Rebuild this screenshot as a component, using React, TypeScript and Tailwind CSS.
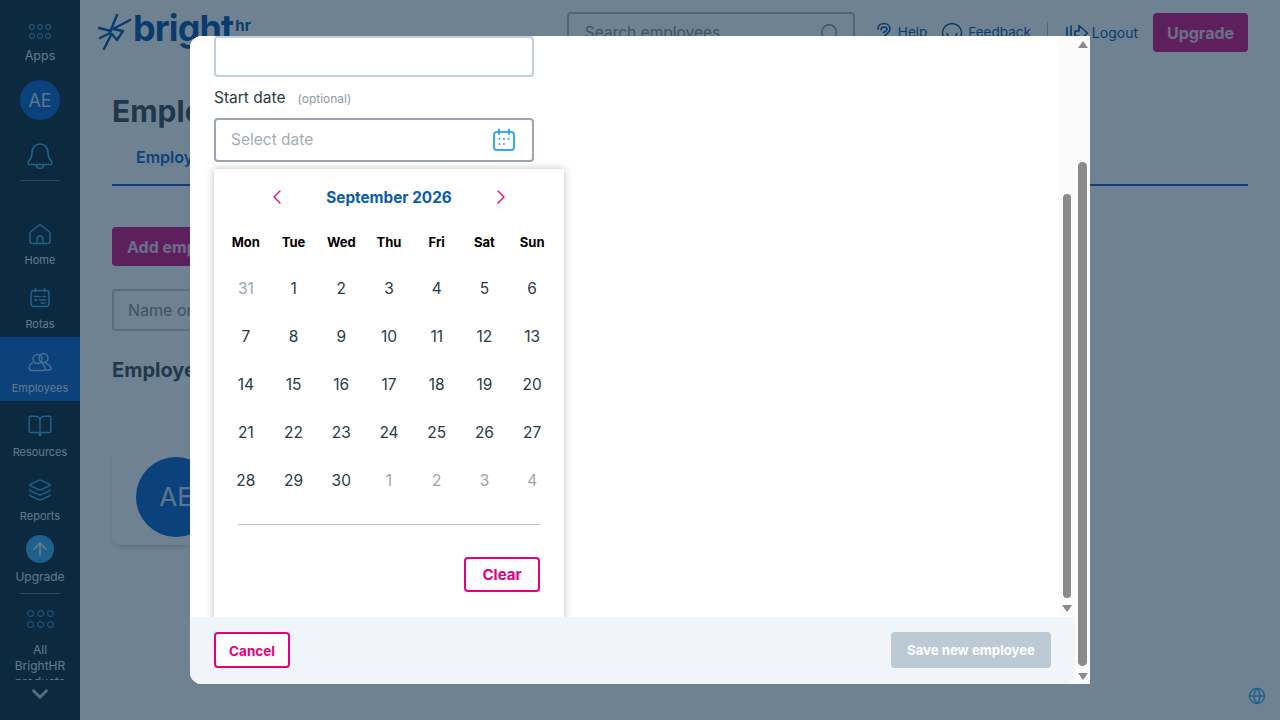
import { BookOpen, ChevronDown, ChevronLeft, ChevronRight, Globe, Layers, Search, ArrowUp } from "lucide-react";

const font = "font-['Inter','Liberation_Sans',sans-serif]";

function Dots({ big }: { big?: boolean }) {
  return (
    <div className={`grid grid-cols-3 ${big ? "gap-x-[3px] gap-y-[4px]" : "gap-x-[2px] gap-y-[3px]"}`}>
      {[0, 1, 2, 3, 4, 5].map((i) => (
        <span key={i} className={`${big ? "w-[7px] h-[7px]" : "w-[6px] h-[6px]"} rounded-full border-[1.5px] border-[#3fb0f5]`} />
      ))}
    </div>
  );
}

function BellIcon() {
  return (
    <svg width="28" height="28" viewBox="0 0 28 28" fill="none" stroke="#3fb0f5" strokeWidth="1.6" strokeLinejoin="round">
      <path d="M14 2c-5 0-8 4-8 8.5 0 5-1.500 7-3.500 9-1 1-.5 3 1 3h21c1.500 0 2-2 1-3-2-2-3.500-4-3.500-9C22 6 19 2 14 2Z" />
      <path d="M10.500 22.500c0 2.500 1.500 4 3.500 4s3.500-1.500 3.500-4" />
    </svg>
  );
}

function HomeIcon() {
  return (
    <svg width="22" height="22" viewBox="0 0 22 22" fill="none" stroke="#3fb0f5" strokeWidth="1.5" strokeLinejoin="round">
      <path d="M11 1.500 2 8.500c-.6.5-1 1-1 2V18c0 1.500 1 2.500 2.500 2.500h15c1.500 0 2.500-1 2.500-2.500v-7.500c0-1-.4-1.500-1-2Z" />
      <path d="M8 20.500V16a3 3 0 0 1 6 0v4.500" />
    </svg>
  );
}

function RotaIcon() {
  return (
    <svg width="22" height="22" viewBox="0 0 22 22" fill="none" stroke="#3fb0f5" strokeWidth="1.5" strokeLinecap="round">
      <rect x="2" y="3.500" width="18" height="16" rx="3" />
      <path d="M6.500 1.500v3.500M15.500 1.500v3.500M5.500 9.500h6M14 9.500h2.500M5.500 13h2.500M10.500 13h6M12 16h4" />
    </svg>
  );
}

function PeopleIcon() {
  return (
    <svg width="24" height="20" viewBox="0 0 24 20" fill="none" stroke="#9fd4f7" strokeWidth="1.4" strokeLinejoin="round">
      <circle cx="9.500" cy="7" r="4.500" />
      <circle cx="15.500" cy="6" r="4.500" />
      <path d="M5 10.500C2.500 12 1 14 1 16c0 1.500 1 2.500 3 2.500h11c2 0 2.500-1 2-2.500-.5-2-2-4-4-5.500M17 11c3 .5 6 3 6 5.500 0 1-.8 1.500-2 1.500h-4" />
    </svg>
  );
}

function CalendarIcon() {
  return (
    <svg width="24" height="24" viewBox="0 0 24 24" fill="none" stroke="#38a9f0" strokeWidth="2" strokeLinecap="round">
      <rect x="2" y="4" width="20" height="18" rx="3" />
      <path d="M7 1.500V6M17 1.500V6" />
      <path d="M7.500 11h.01M12 11h.01M16.500 11h.01M7.500 16h.01M12 16h.01" strokeWidth="2.200" />
    </svg>
  );
}

function HelpIcon() {
  return (
    <svg width="16" height="22" viewBox="0 0 16 22" fill="none" stroke="currentColor" strokeWidth="1.600" strokeLinecap="round" strokeLinejoin="round">
      <path d="M2 7c0-3.500 2.700-5.500 6-5.500s6 2.200 6 5.500c0 3.500-3 4.500-5.500 7-1 1-1.200 2.500-3 2.500-1 0-1.500-.5-2-1" />
      <path d="M5 8c0-2 1.500-3 3-3s3 1 3 2.500-2 2-3.500 3" />
    </svg>
  );
}

function FeedbackIcon() {
  return (
    <svg width="22" height="22" viewBox="0 0 22 22" fill="none" stroke="currentColor" strokeWidth="1.600" strokeLinecap="round">
      <circle cx="11" cy="11" r="9.500" />
      <path d="M6 11.500c1 3 3 4 5 4s4-1 5-4" />
    </svg>
  );
}

function LogoutIcon() {
  return (
    <svg width="24" height="22" viewBox="0 0 24 22" fill="none" stroke="currentColor" strokeWidth="1.600" strokeLinecap="round" strokeLinejoin="round">
      <path d="M2 5.500v13M6 4v16c0 1 1 1.500 2 1l3-1.500" />
      <path d="M10 9h4V3.500L22.500 11 14 18.500V14h-4Z" />
    </svg>
  );
}

function NavItem({ icon, label, active }: { icon: React.ReactNode; label: string; active?: boolean }) {
  return (
    <div className={`h-[64px] flex flex-col items-center justify-end pb-[6px] ${active ? "bg-[#0560c8]" : ""}`}>
      <div className="h-[26px] flex items-center justify-center mb-[6px]">{icon}</div>
      <span className="text-[11px] leading-[14px] text-[#dfe5ea]">{label}</span>
    </div>
  );
}

function Sidebar() {
  return (
    <aside className="w-[80px] h-full shrink-0 bg-[#052333] flex flex-col items-stretch relative overflow-hidden">
      <div className="flex flex-col items-center pt-[24px]">
        <Dots />
        <span className="text-[12.500px] leading-[16px] mt-[9px] text-[#dfe5ea]">Apps</span>
        <div className="w-[40px] h-[40px] rounded-full bg-[#0560c8] text-white/80 text-[18px] flex items-center justify-center mt-[16px]">AE</div>
        <div className="mt-[22px]"><BellIcon /></div>
        <div className="w-[40px] h-px bg-[#5a7585] mt-[10px]" />
      </div>
      <div className="mt-[28px]">
        <NavItem label="Home" icon={<HomeIcon />} />
        <NavItem label="Rotas" icon={<RotaIcon />} />
        <NavItem label="Employees" active icon={<PeopleIcon />} />
        <NavItem label="Resources" icon={<BookOpen size={26} strokeWidth={1.300} className="text-[#3fb0f5]" />} />
        <NavItem label="Reports" icon={<Layers size={24} strokeWidth={1.500} className="text-[#3fb0f5]" />} />
      </div>
      <div className="flex flex-col items-center mt-[6px]">
        <div className="w-[28px] h-[28px] rounded-full bg-[#38a9f0] flex items-center justify-center">
          <ArrowUp size={20} strokeWidth={2} className="text-white/80" />
        </div>
        <span className="text-[12px] leading-[14px] mt-[7px] text-[#dfe5ea]">Upgrade</span>
        <div className="w-[40px] h-px bg-[#5a7585] mt-[9px]" />
        <div className="mt-[16px]"><Dots big /></div>
        <div className="h-[38px] overflow-hidden text-center text-[12px] leading-[16px] text-[#dfe5ea] mt-[14px] w-[60px]">All BrightHR products</div>
      </div>
      <div className="flex justify-center mt-[1px]"><ChevronDown size={26} strokeWidth={2.600} className="text-[#c5d0d8]" /></div>
    </aside>
  );
}

function Logo() {
  return (
    <div className="flex items-start">
      <svg width="34" height="37" viewBox="0 0 34 37" fill="none" stroke="#0250a8" strokeWidth="2.400" strokeLinecap="round" strokeLinejoin="round">
        <path d="M19 1 12 18M1 14l12 3M32 6 15 15l10 2-6 9-5-6M2 24l10-5M6 35l7-14" />
      </svg>
      <span className="text-[36px] leading-[40px] font-bold text-[#0250a8] -mt-[6px] ml-[1px] tracking-tight">bright</span>
      <span className="text-[15px] leading-[16px] font-bold text-[#0250a8] mt-[4px] ml-[2px]">hr</span>
    </div>
  );
}

function Header() {
  return (
    <header className="h-[52px] flex items-center justify-between pl-[18px] pr-[32px] pt-[13px]">
      <Logo />
      <div className="flex items-center text-[#0250a8] text-[14px]">
        <div className="w-[288px] h-[41px] border-2 border-[#a8b8c6] rounded-[4px] flex items-center justify-between pl-[16px] pr-[12px] text-[#7b8a96] text-[15.500px]">
          <span>Search employees</span>
          <Search size={22} strokeWidth={1.500} />
        </div>
        <div className="flex items-center ml-[21px] gap-[6px] text-[13.500px]"><HelpIcon />Help</div>
        <div className="flex items-center ml-[14px] gap-[5px] text-[13.500px]"><FeedbackIcon />Feedback</div>
        <div className="w-px h-[22px] bg-[#a8b8c6] ml-[16px]" />
        <div className="flex items-center ml-[17px] gap-[3px]"><LogoutIcon />Logout</div>
        <div className="w-[95px] h-[39px] ml-[15px] rounded-[4px] bg-[#d4087e] text-white/80 font-bold text-[16px] flex items-center justify-center">Upgrade</div>
      </div>
    </header>
  );
}

function Page() {
  return (
    <div className="absolute inset-0 flex bg-white">
      <Sidebar />
      <main className="flex-1 min-w-0">
        <Header />
        <div className="px-[32px]">
          <h1 className="text-[30px] leading-[36px] font-bold text-[#3b4754] mt-[41px]">Employees</h1>
          <div className="border-b-2 border-[#0560c8] h-[54px] mt-[3px] pl-[24px] pt-[13px] text-[#0560c8] font-semibold text-[16px]">Employees</div>
          <div className="w-[180px] h-[39px] mt-[41px] rounded-[4px] bg-[#d4087e] text-white/80 font-bold text-[16px] flex items-center pl-[15px]">Add employee</div>
          <div className="w-[320px] h-[42px] mt-[23px] rounded-[4px] border-2 border-[#c0ccd8] text-[#7b8a96] text-[16px] flex items-center pl-[14px]">Name or email</div>
          <div className="text-[20px] leading-[24px] font-bold text-[#3b4754] mt-[27px]">Employees</div>
          <div className="w-[320px] h-[97px] mt-[66px] rounded-[8px] shadow-md bg-white flex items-center pl-[24px]">
            <div className="w-[80px] h-[80px] rounded-full bg-[#0560c8] text-white/80 text-[26px] flex items-center justify-center">AE</div>
          </div>
        </div>
      </main>
      <Globe size={18} className="absolute right-[14px] bottom-[15px] text-[#3fb0f5]" />
    </div>
  );
}

function ScrollArrow({ down }: { down?: boolean }) {
  return <div className={`w-0 h-0 border-x-[5px] border-x-transparent ${down ? "border-t-[7px] border-t-[#8a8a8a]" : "border-b-[7px] border-b-[#8a8a8a]"}`} />;
}

function DatePicker() {
  const head = ["Mon", "Tue", "Wed", "Thu", "Fri", "Sat", "Sun"];
  const days = [31, ...Array.from({ length: 30 }, (_, i) => i + 1), 1, 2, 3, 4];
  return (
    <div className="w-[350px] h-[460px] mt-[7px] shadow-[0_0_8px_rgba(0,0,0,0.25)] bg-white shrink-0 pl-[8px] pr-[8px]">
      <div className="flex items-center justify-center h-[57px] gap-[29px] pb-[1px]">
        <ChevronLeft size={24} strokeWidth={1.300} className="text-[#e5007e]" />
        <span className="w-[142px] text-center font-bold text-[#0b5cad] text-[15.300px] mt-[3px]">September 2026</span>
        <ChevronRight size={24} strokeWidth={1.300} className="text-[#e5007e]" />
      </div>
      <div className="grid grid-cols-7 text-center text-[13px] font-bold text-black h-[34px] items-center">
        {head.map((h) => <span key={h}>{h}</span>)}
      </div>
      <div className="grid grid-cols-7 text-center text-[15.500px] text-[#2a3a48] auto-rows-[48px] items-center mt-[5px]">
        {days.map((d, i) => (
          <span key={i} className={i === 0 || i > 30 ? "text-[#9aa5b1]" : ""}>{d}</span>
        ))}
      </div>
      <div className="h-px bg-[#bfc4cc] mx-[16px] mt-[19px]" />
      <div className="flex justify-end mt-[32px] mr-[16px]">
        <button className="w-[76px] h-[35px] rounded-[4px] border-2 border-[#e5007e] text-[#e5007e] font-bold text-[15px] pt-[1px]">Clear</button>
      </div>
    </div>
  );
}

function Modal() {
  return (
    <div className="w-[900px] h-[648px] rounded-l-[12px] bg-white flex overflow-hidden relative">
      <div className="flex-1 min-w-0 flex flex-col bg-[#fbfbfb]">
        <div className="flex-1 min-h-0 flex">
          <div className="flex-1 min-w-0 pl-[24px] overflow-hidden flex flex-col bg-white">
            <div className="w-[320px] h-[41px] shrink-0 border-2 border-[#c3cfdb] rounded-[4px]" />
            <div className="flex items-baseline mt-[9px] h-[24px] shrink-0 text-[#2c3b48]">
              <span className="text-[15.500px]">Start date</span>
              <span className="text-[12px] text-[#8e9aa5] ml-[12px]">(optional)</span>
            </div>
            <div className="w-[320px] h-[44px] shrink-0 mt-[8px] border-2 border-[#9aa5b1] rounded-[4px] flex items-center justify-between pl-[15px] pr-[16px]">
              <span className="text-[#a3adb6] text-[15.500px]">Select date</span>
              <CalendarIcon />
            </div>
            <DatePicker />
          </div>
          <div className="w-[16px] shrink-0 bg-[#fbfbfb] flex flex-col items-center justify-end pb-[5px]">
            <div className="w-[8px] h-[404px] rounded-full bg-[#8a8a8a] mb-[7px]" />
            <ScrollArrow down />
          </div>
        </div>
        <div className="h-[67px] shrink-0 bg-[#f1f5f9] rounded-br-[12px] flex items-center justify-between pl-[24px] pr-[24px] pb-[2px]">
          <button className="w-[76px] h-[36px] rounded-[4px] border-2 border-[#e5007e] bg-white text-[#e5007e] font-bold text-[13.500px] pt-[3px]">Cancel</button>
          <button className="w-[160px] h-[36px] rounded-[4px] bg-[#bccad6] text-white font-bold text-[13.200px] pt-[3px]">Save new employee</button>
        </div>
      </div>
      <div className="w-[15px] shrink-0 bg-[#fbfbfb] flex flex-col items-center pt-[5px] pb-[4px]">
        <ScrollArrow />
        <div className="w-[9px] h-[504px] rounded-full bg-[#8a8a8a] mt-[114px]" />
        <div className="mt-auto"><ScrollArrow down /></div>
      </div>
    </div>
  );
}

export default function App() {
  return (
    <div className={`relative w-[1280px] h-[720px] overflow-hidden ${font}`}>
      <Page />
      <div className="absolute inset-0 bg-[rgba(15,47,72,0.6)] flex items-center justify-center">
        <Modal />
      </div>
    </div>
  );
}
